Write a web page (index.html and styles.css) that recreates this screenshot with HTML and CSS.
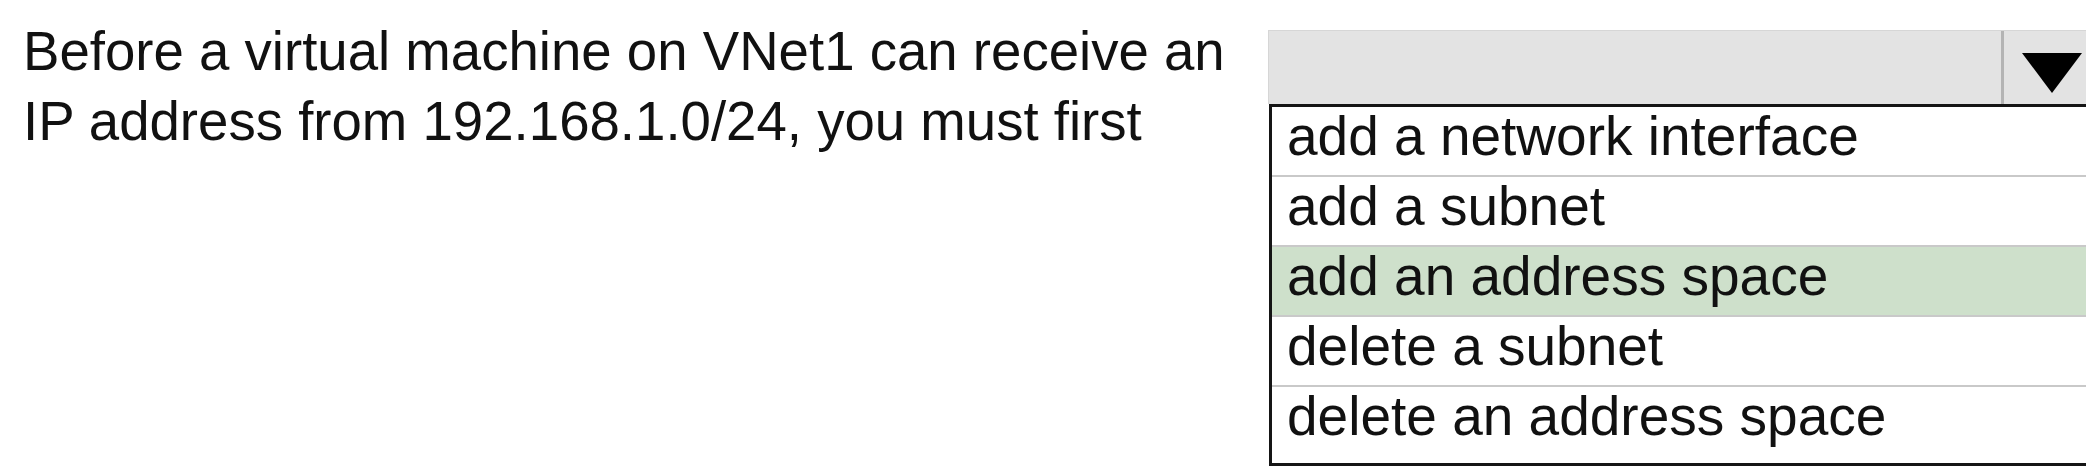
FILE: index.html
```html
<!DOCTYPE html>
<html lang="en">
<head>
<meta charset="utf-8">
<title>Question</title>
<link rel="stylesheet" href="styles.css">
</head>
<body>
<div class="page">
  <p class="question">Before a virtual machine on VNet1 can receive an IP address from 192.168.1.0/24, you must first</p>
  <div class="dropdown">
    <div class="select">
      <span class="value"></span>
      <span class="arrow">
        <svg width="60" height="40" viewBox="0 0 60 40"><polygon points="0,0 60,0 30,40" fill="#000"/></svg>
      </span>
    </div>
    <ul class="options">
      <li class="option">add a network interface</li>
      <li class="option">add a subnet</li>
      <li class="option selected">add an address space</li>
      <li class="option">delete a subnet</li>
      <li class="option">delete an address space</li>
    </ul>
  </div>
</div>
</body>
</html>
```
FILE: styles.css
```css
html, body {
  margin: 0;
  background: #ffffff;
  overflow: hidden;
}
body {
  font-family: "Liberation Sans", Arial, sans-serif;
  color: #111111;
}
.page {
  display: flex;
  align-items: flex-start;
  padding: 17px 0 0 23px;
}
.question {
  margin: 0;
  width: 1245px;
  flex: none;
  font-size: 54.6px;
  line-height: 70px;
}
.dropdown {
  flex: 1;
  min-width: 0;
  margin-top: 13px;
}
.select {
  display: flex;
  height: 73px;
  background: #e3e3e3;
  border-top: 1px solid #d6d6d6;
  border-left: 1px solid #d6d6d6;
}
.value {
  flex: none;
  width: 732px;
  border-right: 3px solid #b4b4b4;
}
.arrow {
  flex: 1;
  display: flex;
  justify-content: flex-end;
  align-items: flex-start;
  padding: 22px 4px 0 0;
}
.options {
  list-style: none;
  margin: 0 0 0 1px;
  padding: 0;
  border-top: 3px solid #151515;
  border-left: 3px solid #151515;
  border-bottom: 3px solid #151515;
  background: #ffffff;
}
.option {
  height: 68px;
  padding-left: 15px;
  font-size: 55px;
  line-height: 58px;
  white-space: nowrap;
  border-bottom: 2px solid #c9c9c9;
}
.option:last-child {
  border-bottom: none;
  height: 76px;
}
.option.selected {
  background: #cee0cb;
}
```
